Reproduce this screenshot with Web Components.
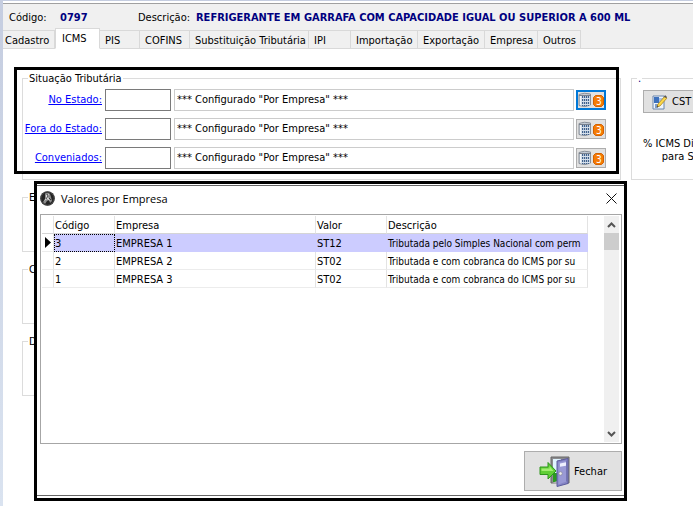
<!DOCTYPE html>
<html lang="pt-BR">
<head>
<meta charset="utf-8">
<title>Cadastro de Produtos</title>
<style>
html, body { height: 100%; }
body { margin: 0; overflow: hidden; background: #fff; color: #000; font: 11px/14px "DejaVu Sans Condensed", "Noto Sans", sans-serif; }
</style>
</head>
<body>
<product-page></product-page>

<template id="t-page">
<style>
:host { display: flex; min-height: 100vh; box-sizing: border-box; border-top: 1px solid #c5cde0; position: relative; overflow: hidden; }
.rail { flex: 0 0 3px; background: linear-gradient(#c5cde0, #dae3f0); }
.page { flex: 1; min-width: 0; display: flex; flex-direction: column; padding-top: 2px; }
.body { display: grid; grid-template-columns: minmax(0, 1fr) 62px; column-gap: 10px; padding: 23px 0 0 19px; }
.stack { display: flex; flex-direction: column; gap: 11px; }
.rows { display: flex; flex-direction: column; gap: 7px; padding: 4px 14px 0 0; }
.frame { position: absolute; left: -8px; right: 2px; top: -5px; bottom: 6px; border: 3px solid #000; pointer-events: none; }
.side { display: flex; flex-direction: column; align-items: flex-start; gap: 24px; padding: 5px 0 0 11px; white-space: nowrap; }
.cst { display: flex; align-items: center; gap: 4px; box-sizing: border-box; width: 86px; height: 23px; padding: 0 0 0 8px; border: 1px solid #adadad; background: #e1e1e1; font: inherit; color: #000; }
.cst svg { width: 16px; height: 16px; }
.side p { margin: 0; text-align: right; line-height: 13px; }
value-dialog { position: absolute; left: 34px; right: 66px; top: 180px; }
</style>
<div class="rail"></div>
<div class="page">
  <product-header code="0797" description="REFRIGERANTE EM GARRAFA COM CAPACIDADE IGUAL OU SUPERIOR A 600 ML"></product-header>
  <div class="body">
    <div class="stack">
      <group-box size="108" label="Situação Tributária">
        <div class="rows">
          <tax-row label="No Estado:" active></tax-row>
          <tax-row label="Fora do Estado:"></tax-row>
          <tax-row label="Conveniados:"></tax-row>
        </div>
        <div class="frame"></div>
      </group-box>
      <group-box size="61" label="E"></group-box>
      <group-box size="61" label="C"></group-box>
      <group-box size="61" label="D"></group-box>
    </div>
    <div>
      <group-box size="108" label="." open>
        <div class="side">
          <button class="cst"><svg viewBox="0 0 16 16"><path d="M1 2h11v13H1z" fill="#eef4fb" stroke="#6b86ad"/><path d="M2 3h5v6H2z" fill="#3d71bd"/><path d="M3 10h3v4H3z" fill="#7c9dcc"/><path d="M7 4h4v5H7z" fill="#a9c2e4"/><path d="M5 13l1-3 7-8 2 2-7 8z" fill="#fbd849" stroke="#a67a15" stroke-width=".7"/><path d="M12 3l1-2 2 2-1 1z" fill="#57565b"/><path d="M5 13l.5-1.500 1 1z" fill="#333"/></svg>CST</button>
          <p>% ICMS Di<br>para S</p>
        </div>
      </group-box>
    </div>
  </div>
</div>
<value-dialog heading="Valores por Empresa"></value-dialog>
</template>

<template id="t-header">
<style>
:host { display: block; background: #f0f0f0; border-top: 1px solid #a0a0a0; }
.info { display: flex; align-items: center; height: 24px; padding: 3px 0 0 6px; box-sizing: border-box; white-space: nowrap; }
.info span { flex: none; }
.code { width: 51px; }
.desc { width: 58px; }
b { color: #000080; }
.num { width: 78px; }
nav { display: flex; align-items: flex-end; height: 21px; box-shadow: inset 0 -1px #d9d9d9; }
button { flex: 0 0 auto; box-sizing: border-box; height: 19px; margin: 0; padding: 2px 0 0 5px; border: 0; border-top: 1px solid #d9d9d9; border-right: 1px solid #d9d9d9; border-bottom: 1px solid #d9d9d9; background: #f0f0f0; font: inherit; text-align: left; color: #000; white-space: nowrap; }
button:first-child { padding-left: 2px; }
button.on { height: 21px; border-left: 1px solid #d9d9d9; border-bottom-color: #fff; background: #fff; padding: 0 0 0 6px; }
</style>
<div class="info"><span class="code">Código:</span><span class="num"><b class="v"></b></span><span class="desc">Descrição:</span><b class="d"></b></div>
<nav role="tablist"></nav>
</template>

<template id="t-group">
<style>
:host { display: block; position: relative; }
fieldset { box-sizing: border-box; min-width: 0; height: 100%; margin: 0; padding: 0; border: 1px solid #dcdcdc; }
legend { margin-left: 5px; padding: 0 1px; height: 13px; line-height: 14px; white-space: nowrap; }
:host([open]) fieldset { border-right: 0; }
:host([open]) legend { color: #000080; }
</style>
<fieldset><legend></legend><slot></slot></fieldset>
</template>

<template id="t-row">
<style>
:host { display: grid; grid-template-columns: 79px 66px minmax(0, 1fr) 30px; column-gap: 3px; align-items: center; height: 22px; }
a { color: #00f; text-align: right; white-space: nowrap; }
input { box-sizing: border-box; width: 100%; height: 22px; margin: 0; border: 1px solid #7a7a7a; background: #fff; font: inherit; padding: 0 3px; }
output { box-sizing: border-box; height: 22px; border: 1px solid #ccc; padding: 3px 2px 1px; line-height: 14px; white-space: nowrap; overflow: hidden; margin-right: -1px; }
button { box-sizing: border-box; width: 30px; height: 20px; margin: 0; padding: 0; border: 1px solid #adadad; background: #e1e1e1; display: block; }
:host([active]) button { border: 2px solid #0078d7; }
svg { display: block; margin: auto; width: 26px; height: 16px; }
text { font: 10px "DejaVu Sans Condensed", sans-serif; fill: #fff; }
</style>
<a href="#"></a><input aria-label=""><output>*** Configurado "Por Empresa" ***</output>
<button aria-label="Valores por empresa"><svg viewBox="0 0 26 16"><path d="M1 2.500Q6 .2 12.500 2v11Q7 16 1 13.500z" fill="#c3ccd7" stroke="#8a9099"/><path d="M2 3.500Q3 2.500 4 3v11l-2-1z" fill="#f4f7fa"/><path d="M4 4h8v9.500H4z" fill="#e3ebf4"/><path d="M4.500 4v10M6.500 4v10M8.500 4v10M10.500 4v10" stroke="#40618c" stroke-width="1.300"/><path d="M3 6.500h9M3 9.500h9M3 12.500h9" stroke="#d6e0eb"/><path d="M1 3.500h12" stroke="#7b828d"/><path d="M17.500 3.500h6l2 2v7l-2 2h-6l-2-2v-7z" fill="#f47b05" stroke="#d56100"/><text x="18" y="13">3</text></svg></button>
</template>

<template id="t-dialog">
<style>
:host { display: block; box-sizing: border-box; border: 3px solid #000; background: #fff; padding: 1px 0 2px; }
.in { border-top: 1px solid #666; border-bottom: 1px solid #666; padding: 0 2px 4px 3px; }
header { display: flex; align-items: center; height: 28px; padding: 0 3px 3px 0; box-sizing: border-box; font: 11px/16px "Open Sans", "Noto Sans", sans-serif; gap: 6px; }
header svg { width: 15px; height: 15px; flex: none; }
h2 { flex: 1; margin: 0; font: inherit; }
header button { border: 0; padding: 0; background: none; display: block; width: 15px; height: 15px; }
.list { display: flex; justify-content: space-between; box-sizing: border-box; height: 230px; border: 1px solid #a6a6a6; padding: 1px; }
.grid { flex: 1; min-width: 0; }
footer { display: flex; justify-content: flex-end; padding-top: 7px; }
.close { box-sizing: border-box; width: 98px; height: 40px; display: flex; align-items: center; gap: 3px; padding: 2px 0 0 14px; margin: 0; border: 1px solid #adadad; background: #e1e1e1; font: inherit; color: #000; }
.close svg { width: 32px; height: 32px; flex: none; margin-top: -2px; }
</style>
<div class="in">
<header>
<svg viewBox="0 0 15 15"><circle cx="7.500" cy="7.500" r="7.300" fill="#242424"/><path d="M5 2.500Q8 1 10 3l1 3 1 4-2 2-1-3-2 1-2 3-2-2 2-3z" fill="#8b8b8b"/><path d="M6 4l3-1-1 3 2 4-3-2-3 2 2-3z" fill="#ddd"/><path d="M7 3l1 2-2 3M9 7l2 2" stroke="#222" fill="none" stroke-width=".8"/><circle cx="7.500" cy="7.500" r="6.600" fill="none" stroke="#555" stroke-width=".7"/></svg>
<h2></h2>
<button aria-label="Fechar janela"><svg viewBox="0 0 15 15"><path d="M2.500 2.500l10 10M12.500 2.500l-10 10" stroke="#111" fill="none"/></svg></button>
</header>
<div class="list"><div class="grid"><value-table></value-table></div><scroll-rail></scroll-rail></div>
<footer><button class="close"><svg viewBox="0 0 32 32"><path d="M12 2h18v26H12z" fill="#8c8c8f" stroke="#666"/><path d="M14 4h8v22h-8z" fill="#dff4ff"/><path d="M14 18h8v9h-8z" fill="#2b9a20"/><path d="M13 28l5-2v3z" fill="#b5b5b5"/><path d="M18 6l11-2.500v25L18 31.500z" fill="#8585c5" stroke="#5c5c9d"/><path d="M19.500 7.500l8-2v21l-8 3z" fill="#9999d5"/><path d="M21 8.500l6-1.300v3.500l-6 1z" fill="#eef0ff"/><path d="M27.500 5.500v21" stroke="#7474b4"/><circle cx="21.500" cy="18.500" r="1.700" fill="#eee" stroke="#777" stroke-width=".5"/><path d="M1 12h8V7.500l8 8.500-8 8v-4.500H1z" fill="#61cf37" stroke="#2e961d" stroke-linejoin="round"/><path d="M2.500 13.500h8v-2.500l4 5H2.500z" fill="#a2ed72"/></svg>Fechar</button></footer>
</div>
</template>

<template id="t-table">
<style>
:host { display: block; }
table { border-collapse: separate; border-spacing: 0; table-layout: fixed; width: 546px; }
th, td { box-sizing: border-box; height: 18px; padding: 2px 0 0 1px; border-right: 1px solid #e3e3e3; border-bottom: 1px solid #ececec; font-weight: normal; text-align: left; line-height: 14px; white-space: nowrap; overflow: hidden; }
td:last-child { font-size: 10px; }
tr > :first-child { padding: 0 0 0 3px; }
th { border-bottom-color: #d5d5d5; }
.on td:not(:first-child) { background: #ccccff; border-color: #ccccff; }
.on td:nth-child(2) { outline: 1px dotted #000; outline-offset: -1px; }
svg { display: block; width: 6px; height: 11px; }
</style>
<table><colgroup><col style="width:12px"><col style="width:61px"><col style="width:201px"><col style="width:71px"><col></colgroup>
<thead><tr><th></th><th>Código</th><th>Empresa</th><th>Valor</th><th>Descrição</th></tr></thead><tbody></tbody></table>
</template>

<template id="t-scroll">
<style>
:host { display: flex; flex-direction: column; width: 15px; background: #f0f0f0; margin-right: 1px; }
svg { width: 15px; height: 17px; display: block; }
.thumb { height: 17px; background: #cdcdcd; }
.track { flex: 1; }
</style>
<svg viewBox="0 0 15 17"><path d="M4 11l3.500-3.500L11 11" fill="none" stroke="#555" stroke-width="2"/></svg>
<div class="thumb"></div><div class="track"></div>
<svg viewBox="0 0 15 17"><path d="M4 7l3.500 3.500L11 7" fill="none" stroke="#555" stroke-width="2"/></svg>
</template>

<script>
class Base extends HTMLElement {
  constructor() {
    super();
    this.attachShadow({ mode: "open" });
    this.shadowRoot.append(document.getElementById(this.constructor.tpl).content.cloneNode(true));
  }
  $(s) { return this.shadowRoot.querySelector(s); }
}
class ProductHeader extends Base {
  static tpl = "t-header";
  connectedCallback() {
    this.$(".v").textContent = this.getAttribute("code");
    this.$(".d").textContent = this.getAttribute("description");
    const tabs = [["Cadastro", 52], ["ICMS", 45], ["PIS", 40], ["COFINS", 50], ["Substituição Tributária", 119], ["IPI", 42], ["Importação", 67], ["Exportação", 67], ["Empresa", 53], ["Outros", 43]];
    for (const [name, width] of tabs) {
      const b = document.createElement("button");
      b.textContent = name;
      b.style.width = width + "px";
      b.setAttribute("role", "tab");
      if (name === "ICMS") b.className = "on";
      this.$("nav").append(b);
    }
  }
}
class GroupBox extends Base {
  static tpl = "t-group";
  connectedCallback() {
    this.$("legend").textContent = this.getAttribute("label");
    this.style.height = this.getAttribute("size") + "px";
  }
}
class TaxRow extends Base {
  static tpl = "t-row";
  connectedCallback() {
    this.$("a").textContent = this.getAttribute("label");
    this.$("input").setAttribute("aria-label", this.getAttribute("label"));
  }
}
class ValueTable extends Base {
  static tpl = "t-table";
  connectedCallback() {
    const rows = [
      ["3", "EMPRESA 1", "ST12", "Tributada pelo Simples Nacional com perm"],
      ["2", "EMPRESA 2", "ST02", "Tributada e com cobranca do ICMS por su"],
      ["1", "EMPRESA 3", "ST02", "Tributada e com cobranca do ICMS por su"]
    ];
    rows.forEach((r, i) => {
      const tr = this.$("tbody").appendChild(document.createElement("tr"));
      const mark = tr.insertCell();
      if (i === 0) {
        tr.className = "on";
        mark.innerHTML = '<svg viewBox="0 0 6 11"><path d="M0 0l6 5.500L0 11z"/></svg>';
      }
      r.forEach(t => { tr.insertCell().textContent = t; });
    });
  }
}
class ScrollRail extends Base { static tpl = "t-scroll"; }
class ValueDialog extends Base {
  static tpl = "t-dialog";
  connectedCallback() { this.$("h2").textContent = this.getAttribute("heading"); }
}
class ProductPage extends Base { static tpl = "t-page"; }
customElements.define("product-header", ProductHeader);
customElements.define("group-box", GroupBox);
customElements.define("tax-row", TaxRow);
customElements.define("value-table", ValueTable);
customElements.define("scroll-rail", ScrollRail);
customElements.define("value-dialog", ValueDialog);
customElements.define("product-page", ProductPage);
</script>
</body>
</html>
